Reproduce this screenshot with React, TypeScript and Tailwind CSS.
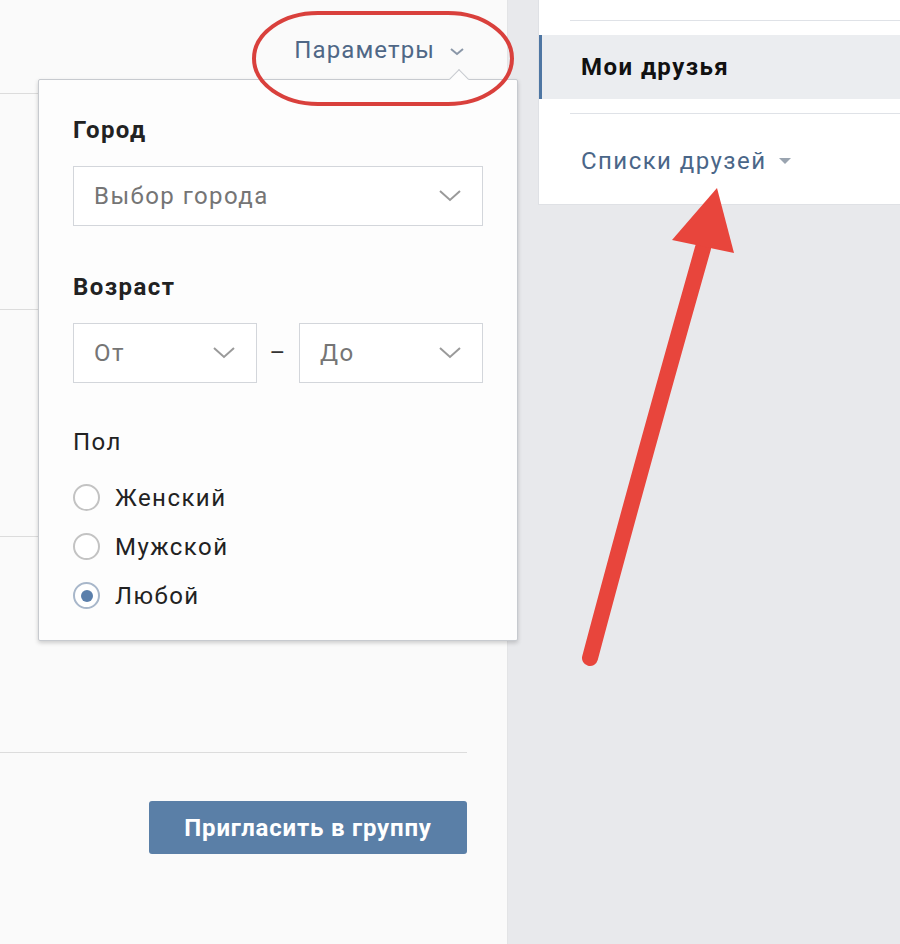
import React from "react"

const font = { fontFamily: "Roboto, 'Noto Sans', Arial, sans-serif" }

function Chevron({ className = "" }: { className?: string }) {
  return (
    <svg width="24" height="14" viewBox="0 0 24 14" className={className}>
      <path d="M2 2 L12 11 L22 2" fill="none" stroke="#9a9a9a" strokeWidth="2" />
    </svg>
  )
}

function Select({ label, width }: { label: string; width: string }) {
  return (
    <div className={`${width} h-[60px] border border-[#d3d6db] bg-white flex items-center justify-between pl-[20px] pr-[20px]`}>
      <span className="text-[24px] text-[#757575]">{label}</span>
      <Chevron />
    </div>
  )
}

function Radio({ label, checked }: { label: string; checked?: boolean }) {
  return (
    <div className="flex items-center h-[49px]">
      <span
        className={`w-[27px] h-[27px] rounded-full border-2 flex items-center justify-center bg-white ${
          checked ? "border-[#a8b7ca]" : "border-[#c3c3c3]"
        }`}
      >
        {checked && <span className="w-[12px] h-[12px] rounded-full bg-[#5b7fab]" />}
      </span>
      <span className="ml-[15px] text-[24px] text-[#222]">{label}</span>
    </div>
  )
}

function FilterPopup() {
  return (
    <div className="absolute left-[38px] top-[79px] w-[480px] h-[562px] bg-[#fdfdfd] border border-[#c7cacf] rounded-[2px] shadow-[0_2px_4px_rgba(0,0,0,0.18)] px-[34px] pt-[36px]">
      {/* caret */}
      <div className="absolute -top-[8px] left-[413px] w-[14px] h-[14px] bg-[#fdfdfd] border-l border-t border-[#c7cacf] rotate-45" />
      <div className="text-[24px] font-bold text-[#222] leading-[28px]">Город</div>
      <div className="mt-[22px]">
        <Select label="Выбор города" width="w-[410px]" />
      </div>
      <div className="mt-[47px] text-[24px] font-bold text-[#222] leading-[28px]">Возраст</div>
      <div className="mt-[22px] flex items-center">
        <Select label="От" width="w-[184px]" />
        <span className="w-[42px] text-center text-[24px] text-[#333] leading-none">–</span>
        <Select label="До" width="w-[184px]" />
      </div>
      <div className="mt-[45px] text-[24px] text-[#222] leading-[28px]">Пол</div>
      <div className="mt-[17px]">
        <Radio label="Женский" />
        <Radio label="Мужской" />
        <Radio label="Любой" checked />
      </div>
    </div>
  )
}

function LeftColumn() {
  return (
    <div className="w-[508px] shrink-0 bg-[#fafafa] border-r border-[#e3e4e6] flex flex-col">
      <div className="h-[94px] w-[467px] border-b border-[#dcdcdc] flex items-center justify-end pt-[6px] pr-[2px]">
        <span className="text-[24px] tracking-[1.1px] text-[#4f6786]">Параметры</span>
        <svg width="16" height="10" viewBox="0 0 16 10" className="ml-[14px] mt-[4px]">
          <path d="M2 2 L8 7 L14 2" fill="none" stroke="#8a97a8" strokeWidth="2" />
        </svg>
      </div>
      <div className="h-[216px] w-[467px] border-b border-[#dcdcdc]" />
      <div className="h-[227px] w-[467px] border-b border-[#dcdcdc]" />
      <div className="h-[216px] w-[467px] border-b border-[#dcdcdc]" />
      <div className="w-[467px] flex justify-end pt-[48px]">
        <button className="w-[318px] h-[53px] rounded-[3px] bg-[#5a7fa7] text-white text-[24px] tracking-[0.8px] font-bold">
          Пригласить в группу
        </button>
      </div>
    </div>
  )
}

function RightColumn() {
  return (
    <div className="flex-1 bg-[#e8e9ec] pl-[30px]">
      <div className="h-[205px] bg-white border-l border-b border-[#dfe1e5] pt-[20px]">
        <div className="ml-[31px] border-t border-[#dfe2e7]" />
        <div className="mt-[14px] h-[64px] bg-[#ebedf0] border-l-[3px] border-[#4e76a3] flex items-center pl-[39px]">
          <span className="text-[24px] font-bold text-[#111]">Мои друзья</span>
        </div>
        <div className="ml-[31px] mt-[14px] border-t border-[#dfe2e7]" />
        <div className="flex items-center pl-[42px] mt-[29px]">
          <span className="text-[24px] text-[#4a6688]">Списки друзей</span>
          <svg width="14" height="8" viewBox="0 0 14 8" className="ml-[12px]">
            <path d="M1 1 L13 1 L7 7 Z" fill="#9aa4b0" />
          </svg>
        </div>
      </div>
    </div>
  )
}

export default function App() {
  return (
    <div className="relative w-[900px] h-[944px] overflow-hidden flex tracking-[1.45px]" style={font}>
      <LeftColumn />
      <RightColumn />
      <FilterPopup />
      {/* annotation overlay: red ellipse and arrow */}
      <svg className="absolute inset-0 pointer-events-none" width="900" height="944" viewBox="0 0 900 944">
        <rect x="254" y="13" width="258" height="91" rx="64" ry="45.5" fill="none" stroke="#d9403c" strokeWidth="4" />
        <path d="M590 658 Q 640 470 703 248" fill="none" stroke="#e8453c" strokeWidth="16" strokeLinecap="round" />
        <path d="M672 240 L717 188 L734 253 Z" fill="#e8453c" />
      </svg>
    </div>
  )
}
